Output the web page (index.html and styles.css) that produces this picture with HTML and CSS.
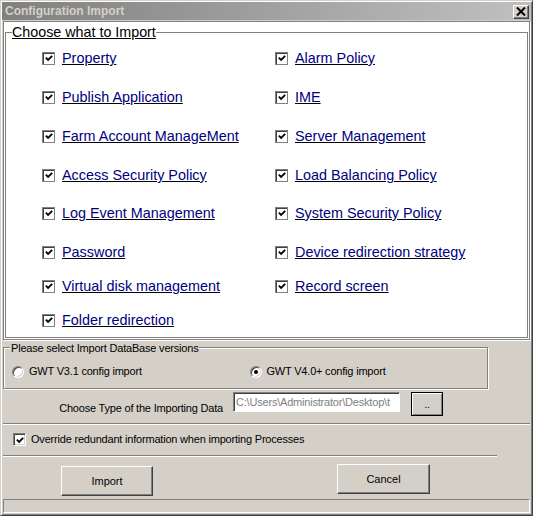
FILE: index.html
```html
<!DOCTYPE html>
<html>
<head>
<meta charset="utf-8">
<link rel="stylesheet" href="styles.css">
</head>
<body>
<div class="window">
  <div class="titlebar">
    <span class="title">Configuration Import</span>
    <span class="close"><svg width="10" height="9" viewBox="0 0 10 9"><path d="M1 0.5 L9 8.5 M9 0.5 L1 8.5" stroke="#000" stroke-width="2"/></svg></span>
  </div>
  <div class="panel">
    <div class="group">
      <span class="legend">Choose what to Import</span>
      <div class="items">
        <div class="item"><span class="cb"><svg width="11" height="11" viewBox="0 0 11 11"><path d="M2 4.5 L4.5 7 L9 2.5" fill="none" stroke="#000" stroke-width="2"/></svg></span><span class="lbl">Property</span></div>
        <div class="item"><span class="cb"><svg width="11" height="11" viewBox="0 0 11 11"><path d="M2 4.5 L4.5 7 L9 2.5" fill="none" stroke="#000" stroke-width="2"/></svg></span><span class="lbl">Alarm Policy</span></div>
        <div class="item"><span class="cb"><svg width="11" height="11" viewBox="0 0 11 11"><path d="M2 4.5 L4.5 7 L9 2.5" fill="none" stroke="#000" stroke-width="2"/></svg></span><span class="lbl">Publish Application</span></div>
        <div class="item"><span class="cb"><svg width="11" height="11" viewBox="0 0 11 11"><path d="M2 4.5 L4.5 7 L9 2.5" fill="none" stroke="#000" stroke-width="2"/></svg></span><span class="lbl">IME</span></div>
        <div class="item"><span class="cb"><svg width="11" height="11" viewBox="0 0 11 11"><path d="M2 4.5 L4.5 7 L9 2.5" fill="none" stroke="#000" stroke-width="2"/></svg></span><span class="lbl">Farm Account ManageMent</span></div>
        <div class="item"><span class="cb"><svg width="11" height="11" viewBox="0 0 11 11"><path d="M2 4.5 L4.5 7 L9 2.5" fill="none" stroke="#000" stroke-width="2"/></svg></span><span class="lbl">Server Management</span></div>
        <div class="item"><span class="cb"><svg width="11" height="11" viewBox="0 0 11 11"><path d="M2 4.5 L4.5 7 L9 2.5" fill="none" stroke="#000" stroke-width="2"/></svg></span><span class="lbl">Access Security Policy</span></div>
        <div class="item"><span class="cb"><svg width="11" height="11" viewBox="0 0 11 11"><path d="M2 4.5 L4.5 7 L9 2.5" fill="none" stroke="#000" stroke-width="2"/></svg></span><span class="lbl">Load Balancing Policy</span></div>
        <div class="item"><span class="cb"><svg width="11" height="11" viewBox="0 0 11 11"><path d="M2 4.5 L4.5 7 L9 2.5" fill="none" stroke="#000" stroke-width="2"/></svg></span><span class="lbl">Log Event Management</span></div>
        <div class="item"><span class="cb"><svg width="11" height="11" viewBox="0 0 11 11"><path d="M2 4.5 L4.5 7 L9 2.5" fill="none" stroke="#000" stroke-width="2"/></svg></span><span class="lbl">System Security Policy</span></div>
        <div class="item"><span class="cb"><svg width="11" height="11" viewBox="0 0 11 11"><path d="M2 4.5 L4.5 7 L9 2.5" fill="none" stroke="#000" stroke-width="2"/></svg></span><span class="lbl">Password</span></div>
        <div class="item"><span class="cb"><svg width="11" height="11" viewBox="0 0 11 11"><path d="M2 4.5 L4.5 7 L9 2.5" fill="none" stroke="#000" stroke-width="2"/></svg></span><span class="lbl">Device redirection strategy</span></div>
        <div class="item"><span class="cb"><svg width="11" height="11" viewBox="0 0 11 11"><path d="M2 4.5 L4.5 7 L9 2.5" fill="none" stroke="#000" stroke-width="2"/></svg></span><span class="lbl">Virtual disk management</span></div>
        <div class="item"><span class="cb"><svg width="11" height="11" viewBox="0 0 11 11"><path d="M2 4.5 L4.5 7 L9 2.5" fill="none" stroke="#000" stroke-width="2"/></svg></span><span class="lbl">Record screen</span></div>
        <div class="item"><span class="cb"><svg width="11" height="11" viewBox="0 0 11 11"><path d="M2 4.5 L4.5 7 L9 2.5" fill="none" stroke="#000" stroke-width="2"/></svg></span><span class="lbl">Folder redirection</span></div>
      </div>
    </div>
  </div>

  <div class="versions">
    <span class="legend2">Please select Import DataBase versions</span>
    <div class="radios">
      <div class="radio-item"><span class="radio"></span><span>GWT V3.1 config import</span></div>
      <div class="radio-item second"><span class="radio checked"></span><span>GWT V4.0+ config import</span></div>
    </div>
  </div>

  <div class="type-row">
    <span class="type-label">Choose Type of the Importing Data</span>
    <span class="path-input">C:\Users\Administrator\Desktop\t</span>
    <span class="browse">..</span>
  </div>

  <div class="sep"></div>

  <div class="override">
    <span class="cb cb3d"><svg width="11" height="11" viewBox="0 0 11 11"><path d="M2 4.5 L4.5 7 L9 2.5" fill="none" stroke="#000" stroke-width="2"/></svg></span>
    <span>Override redundant information when importing Processes</span>
  </div>

  <div class="sep short"></div>

  <div class="buttons">
    <span class="btn import">Import</span>
    <span class="btn cancel">Cancel</span>
  </div>

  <div class="status"></div>
</div>
</body>
</html>
```
FILE: styles.css
```css
* { box-sizing: border-box; }
html, body { margin: 0; padding: 0; }
body {
  width: 533px;
  height: 516px;
  background: #d4d0c8;
  font-family: "Liberation Sans", Arial, sans-serif;
  overflow: hidden;
}
.window {
  width: 533px;
  height: 516px;
  border: 1px solid;
  border-color: #d4d0c8 #404040 #404040 #d4d0c8;
  box-shadow: inset 1px 1px 0 #fff, inset -1px -1px 0 #808080;
  padding: 1px;
  background: #d4d0c8;
}
.titlebar {
  height: 18px;
  display: flex;
  align-items: flex-start;
  background: linear-gradient(to right, #808080, #c0c0c0);
  padding-left: 3px;
}
.title {
  color: #d4d0c8;
  font-weight: bold;
  font-size: 12px;
  line-height: 19px;
}
.close {
  margin-left: auto;
  margin-right: 2px;
  margin-top: 3px;
  width: 16px;
  height: 14px;
  background: #d4d0c8;
  border: 1px solid;
  border-color: #fff #404040 #404040 #fff;
  box-shadow: inset -1px -1px 0 #808080;
  display: flex;
  align-items: center;
  justify-content: center;
}
.close svg { display: block; margin-top: -1px; margin-left: -1px; }

.panel {
  margin: 1px 0 0 1px;
  width: 527px;
  height: 319px;
  background: #fff;
  border: 1px solid #808080;
  box-shadow: 1px 1px 0 #fff;
  padding: 0 1px;
}
.group {
  position: relative;
  margin-top: 10px;
  height: 306px;
  border: 1px solid #808080;
  padding: 15px 0 0 36px;
}
.legend {
  position: absolute;
  top: -9px;
  left: 6px;
  background: #fff;
  font-size: 14.3px;
  line-height: 16px;
  color: #000;
  text-decoration: underline;
}
.items {
  display: grid;
  grid-template-columns: 233px 234px;
  grid-template-rows: 39px 39px 39px 38px 39px 34px 34px 20px;
}
.item {
  display: flex;
  align-items: center;
  height: 20px;
}
.cb {
  width: 13px;
  height: 13px;
  border: 1px solid #808080;
  box-shadow: inset 1px 1px 0 #404040;
  background: #fff;
  display: flex;
  align-items: center;
  justify-content: center;
  flex: none;
}
.cb svg { display: block; margin: 1px 0 0 1px; }
.lbl {
  margin-left: 7px;
  font-size: 14.4px;
  color: #000080;
  text-decoration: underline;
  text-decoration-color: #000;
  white-space: nowrap;
}

.versions {
  position: relative;
  margin: 7px 0 0 1px;
  width: 485px;
  height: 42px;
  border: 1px solid #808080;
  box-shadow: inset 1px 1px 0 #fff, 1px 1px 0 #fff;
  font-size: 11px;
  letter-spacing: -0.2px;
}
.legend2 {
  position: absolute;
  top: -6px;
  left: 6px;
  padding: 0 1px;
  background: #d4d0c8;
  line-height: 13px;
  white-space: nowrap;
}
.radios {
  display: flex;
  padding: 17px 0 0 8px;
}
.radio-item {
  display: flex;
  align-items: center;
  gap: 5px;
  line-height: 13px;
  width: 238px;
  white-space: nowrap;
}
.radio {
  width: 12px;
  height: 12px;
  border-radius: 50%;
  border: 1px solid;
  border-color: #808080 #fff #fff #808080;
  box-shadow: inset 1px 1px 0 #404040, inset -1px -1px 0 #d4d0c8;
  background: #fff;
  position: relative;
  flex: none;
}
.radio.checked::after {
  content: "";
  position: absolute;
  left: 3px;
  top: 3px;
  width: 4px;
  height: 4px;
  border-radius: 50%;
  background: #000;
}

.type-row {
  display: flex;
  align-items: flex-start;
  margin-top: 3px;
  font-size: 11px;
  letter-spacing: -0.2px;
}
.type-label {
  width: 221px;
  text-align: right;
  margin-top: 10px;
  line-height: 13px;
  white-space: nowrap;
}
.path-input {
  margin-left: 10px;
  width: 167px;
  height: 20px;
  border: 1px solid;
  border-color: #808080 #fff #fff #808080;
  box-shadow: inset 1px 1px 0 #404040;
  background: #fff;
  color: #808080;
  padding: 3px 0 0 2px;
  line-height: 13px;
  white-space: nowrap;
  overflow: hidden;
}
.browse {
  margin-left: 11px;
  width: 32px;
  height: 24px;
  border: 1px solid #000;
  box-shadow: inset 1px 1px 0 #fff, inset -1px -1px 0 #808080;
  display: flex;
  align-items: center;
  justify-content: center;
  line-height: 13px;
}

.sep {
  margin: 7px 0 0 1px;
  width: 527px;
  height: 2px;
  border-top: 1px solid #808080;
  border-bottom: 1px solid #fff;
}
.sep.short {
  width: 494px;
  margin-top: 9px;
}
.override {
  display: flex;
  align-items: center;
  margin-top: 8px;
  padding-left: 11px;
  font-size: 11px;
  letter-spacing: -0.2px;
  line-height: 13px;
  gap: 5px;
  white-space: nowrap;
}
.cb3d {
  border-color: #808080 #fff #fff #808080;
  box-shadow: inset 1px 1px 0 #404040, inset -1px -1px 0 #d4d0c8;
}

.buttons {
  display: flex;
  align-items: flex-start;
  margin-top: 7px;
  font-size: 11px;
}
.btn {
  height: 30px;
  border: 1px solid;
  border-color: #fff #404040 #404040 #fff;
  box-shadow: inset -1px -1px 0 #808080;
  display: flex;
  align-items: center;
  justify-content: center;
  line-height: 13px;
}
.import { margin-left: 59px; width: 92px; margin-top: 2px; }
.cancel { margin-left: 184px; width: 93px; }

.status {
  margin: 3px 0 0 1px;
  width: 527px;
  height: 14px;
  border: 1px solid;
  border-color: #808080 #fff #fff #808080;
}
```
